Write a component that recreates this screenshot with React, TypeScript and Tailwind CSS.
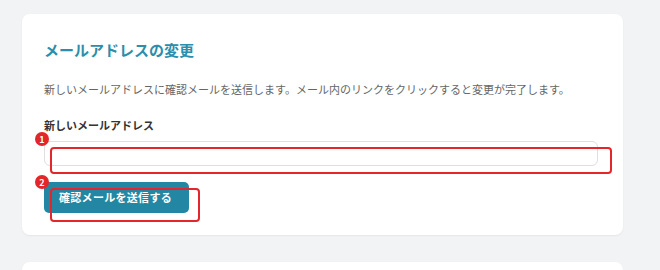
// メールアドレス変更カード（注釈つき）

const jp = { fontFamily: '"Noto Sans CJK JP", "Noto Sans", sans-serif' };

function Badge({ n, className }: { n: number; className: string }) {
  return (
    <span
      className={`absolute flex h-[14px] w-[14px] items-center justify-center rounded-full bg-[#e3262c] text-[9px] font-bold leading-none text-white ${className}`}
    >
      {n}
    </span>
  );
}

export default function App() {
  return (
    <div className="flex h-[270px] w-[660px] flex-col gap-[27px] overflow-hidden bg-[#f2f3f5] pl-[22px] pt-[14px]" style={jp}>
      <div className="relative flex w-[601px] shrink-0 flex-col items-start rounded-lg bg-white px-[22px] pb-[22px] pt-[24px] shadow-[0_1px_2px_rgba(0,0,0,0.06)]">
        <h2 className="text-[15px] font-bold leading-[24px] text-[#2c8eaa]">メールアドレスの変更</h2>
        <p className="mt-[18px] text-[11px] leading-[18px] text-[#666]">
          新しいメールアドレスに確認メールを送信します。メール内のリンクをクリックすると変更が完了します。
        </p>
        <div className="mt-[18px] flex w-full flex-col gap-[7px]">
          <label className="text-[11px] font-bold leading-[18px] text-[#333]">新しいメールアドレス</label>
          <input
            type="email"
            className="h-[25px] w-[554px] rounded-md border border-[#dedfe2] bg-white px-2 text-[12px] outline-none"
          />
        </div>
        <button className="mt-[16px] flex h-[31px] w-[145px] items-center rounded-[5px] bg-[#2387a3] pl-[15px] text-[11px] font-bold tracking-[0.3px] text-white">
          確認メールを送信する
        </button>

        <div className="pointer-events-none absolute left-[28px] top-[133px] h-[27px] w-[562px] rounded-[4px] border-2 border-[#e3262c]" />
        <div className="pointer-events-none absolute left-[28px] top-[174px] h-[34px] w-[150px] rounded-[4px] border-2 border-[#e3262c]" />
        <Badge n={1} className="left-[13px] top-[118px]" />
        <Badge n={2} className="left-[13px] top-[161px]" />
      </div>
      <div className="h-[60px] w-[601px] shrink-0 rounded-lg bg-white shadow-[0_1px_2px_rgba(0,0,0,0.06)]" />
    </div>
  );
}
